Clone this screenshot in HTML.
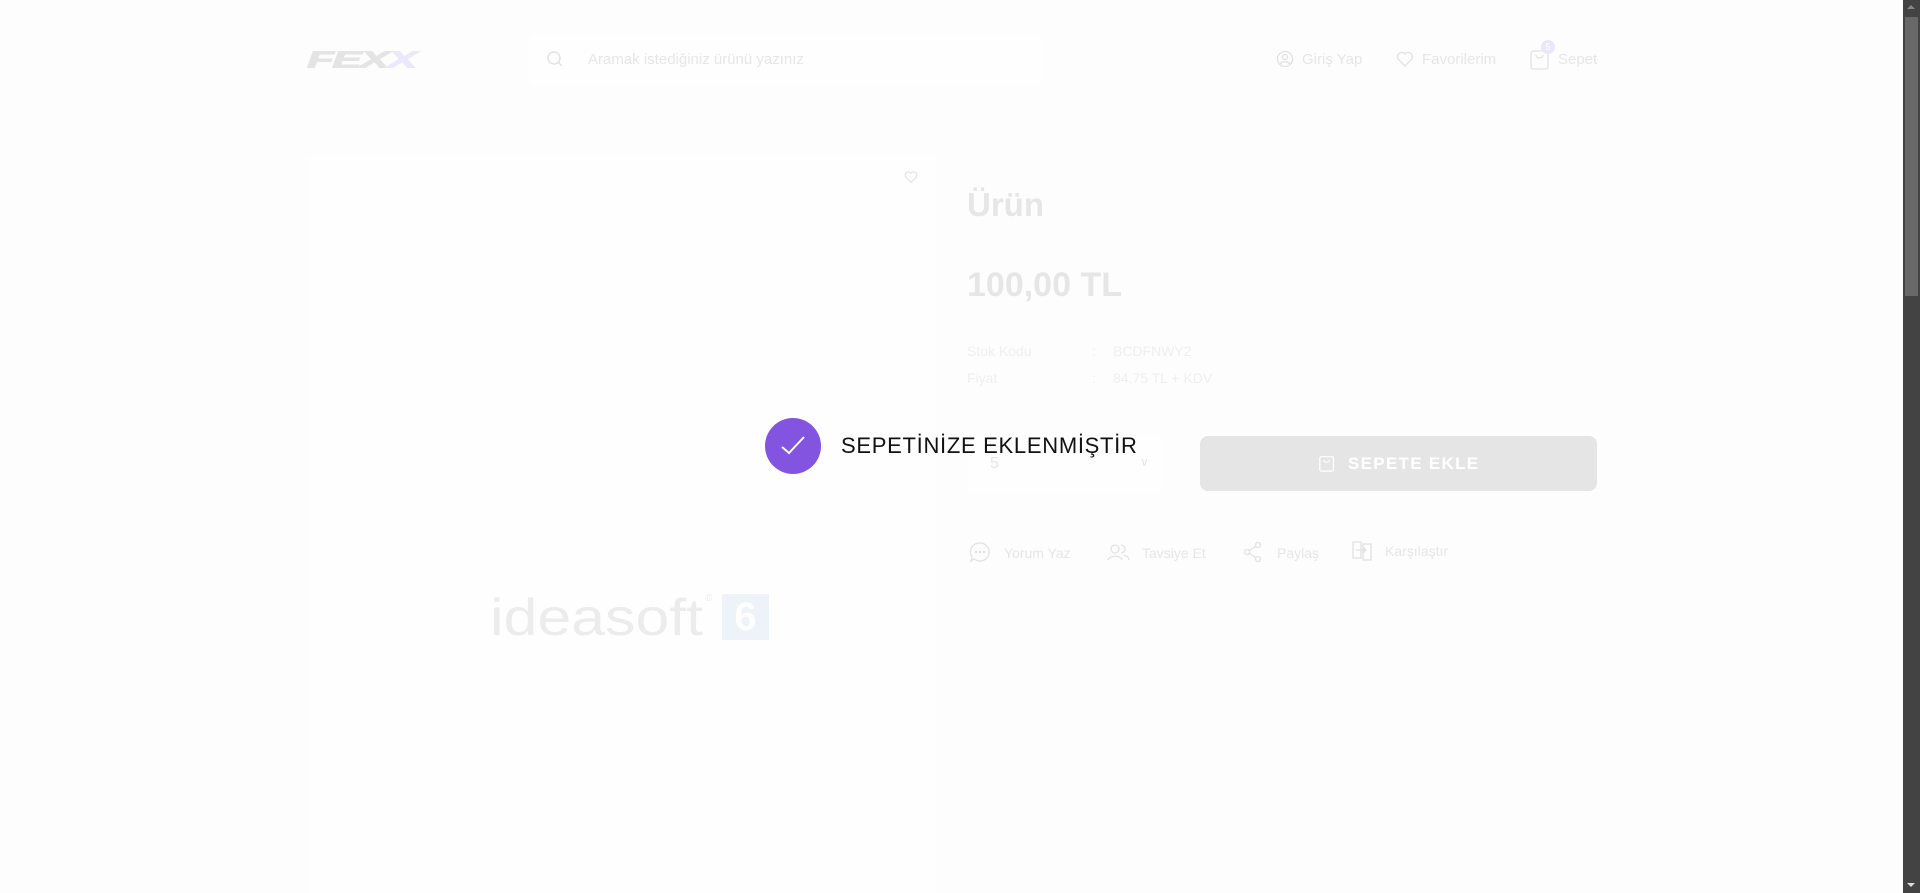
<!DOCTYPE html>
<html><head><meta charset="utf-8"><style>
*{margin:0;padding:0;box-sizing:border-box}
body{width:1920px;height:893px;overflow:hidden;background:#fdfdfd;font-family:"Liberation Sans",sans-serif;position:relative}
.a{position:absolute}
.t{color:#e6e6e6}
</style></head><body>
<div class="a" style="left:307px;top:46px;font:italic bold 26px 'Liberation Sans';color:#e4e4e4;letter-spacing:-1px;transform:scale(1.7,0.9);transform-origin:left top;-webkit-text-stroke:1px #e4e4e4">FEX<span style="color:#ece8fb;-webkit-text-stroke:1px #ece8fb">X</span></div>
<div class="a" style="left:529px;top:34px;width:514px;height:52px;background:#fefefe;border-radius:8px"></div>
<svg class="a" style="left:546px;top:50px" width="18" height="18" viewBox="0 0 18 18" fill="none" stroke="#e2e2e2" stroke-width="1.5"><circle cx="8" cy="8" r="6"/><path d="M12.5 12.5L16 16"/></svg>
<div class="a t" style="left:588px;top:51px;font-size:15px">Aramak istediğiniz ürünü yazınız</div>
<svg class="a" style="left:1276px;top:50px" width="18" height="18" viewBox="0 0 18 18" fill="none" stroke="#e2e2e2" stroke-width="1.3"><circle cx="9" cy="9" r="7.5"/><circle cx="9" cy="7" r="2.5"/><path d="M4 14c2-3 8-3 10 0"/></svg>
<div class="a t" style="left:1302px;top:51px;font-size:15px">Giriş Yap</div>
<svg class="a" style="left:1396px;top:50px" width="18" height="18" viewBox="0 0 18 18" fill="none" stroke="#e2e2e2" stroke-width="1.3"><path d="M9 16L2.5 9.5A3.8 3.8 0 019 4a3.8 3.8 0 016.5 5.5z"/></svg>
<div class="a t" style="left:1422px;top:51px;font-size:15px">Favorilerim</div>
<svg class="a" style="left:1530px;top:49px" width="20" height="21" viewBox="0 0 20 21" fill="none" stroke="#e2e2e2" stroke-width="1.3"><rect x="1" y="2" width="17" height="18" rx="2"/><path d="M6 6c0 4 7 4 7 0"/></svg>
<div class="a" style="left:1541px;top:40px;width:14px;height:14px;border-radius:50%;background:#ebe6fb;color:#fff;font-size:9px;text-align:center;line-height:14px">5</div>
<div class="a t" style="left:1558px;top:51px;font-size:15px">Sepet</div>

<div class="a" style="left:307px;top:157px;width:630px;height:736px;background:#fefefe"></div>
<svg class="a" style="left:904px;top:170px" width="14" height="14" viewBox="0 0 18 18" fill="none" stroke="#e2e2e2" stroke-width="1.5"><path d="M9 16L2.5 9.5A3.8 3.8 0 019 4a3.8 3.8 0 016.5 5.5z"/></svg>
<div class="a" style="left:490px;top:588px;font:300 52px 'Liberation Sans';color:#ececec;transform:scale(1.17,1);transform-origin:left top">ideasoft</div>
<div class="a" style="left:705px;top:593px;font-size:10px;color:#ececec">®</div>
<div class="a" style="left:722px;top:594px;width:47px;height:46px;background:#edf3f9;color:#fff;font:bold 40px 'Liberation Sans';text-align:center;line-height:46px">6</div>

<div class="a t" style="left:967px;top:186px;font-size:33px;font-weight:bold">Ürün</div>
<div class="a t" style="left:967px;top:266px;font-size:34px;font-weight:bold">100,00 TL</div>
<div class="a" style="left:967px;top:343px;font-size:14px;color:#efefef">Stok Kodu</div>
<div class="a" style="left:1092px;top:343px;font-size:14px;color:#efefef">:</div>
<div class="a" style="left:1113px;top:343px;font-size:14px;color:#efefef">BCDFNWY2</div>
<div class="a" style="left:967px;top:370px;font-size:14px;color:#efefef">Fiyat</div>
<div class="a" style="left:1092px;top:370px;font-size:14px;color:#efefef">:</div>
<div class="a" style="left:1113px;top:370px;font-size:14px;color:#efefef">84,75 TL + KDV</div>

<div class="a" style="left:967px;top:436px;width:196px;height:55px;background:#fefefe;border-radius:6px"></div>
<div class="a t" style="left:990px;top:455px;font-size:16px">5</div>
<div class="a t" style="left:1140px;top:455px;font-size:12px">∨</div>
<div class="a" style="left:1200px;top:436px;width:397px;height:55px;background:#e5e5e5;border-radius:8px"></div>
<svg class="a" style="left:1319px;top:455px" width="16" height="17" viewBox="0 0 20 21" fill="none" stroke="#fff" stroke-width="1.5"><rect x="1" y="2" width="17" height="18" rx="2"/><path d="M6 6c0 4 7 4 7 0"/></svg>
<div class="a" style="left:1348px;top:454px;font-size:17px;font-weight:bold;color:#fff;letter-spacing:1.3px">SEPETE EKLE</div>

<svg class="a" style="left:969px;top:541px" width="22" height="22" viewBox="0 0 22 22" fill="none" stroke="#e2e2e2" stroke-width="1.3"><path d="M11 2a9 9 0 11-6 15.7L2 20l1-4A9 9 0 0111 2z"/><circle cx="7" cy="11" r=".6"/><circle cx="11" cy="11" r=".6"/><circle cx="15" cy="11" r=".6"/></svg>
<div class="a t" style="left:1004px;top:545px;font-size:14px">Yorum Yaz</div>
<svg class="a" style="left:1107px;top:543px" width="24" height="18" viewBox="0 0 24 18" fill="none" stroke="#e2e2e2" stroke-width="1.3"><circle cx="8" cy="6" r="4"/><path d="M1 17c1-5 13-5 14 0"/><path d="M14 2a4 4 0 010 8M17 12c3 1 5 3 5 5"/></svg>
<div class="a t" style="left:1142px;top:545px;font-size:14px">Tavsiye Et</div>
<svg class="a" style="left:1243px;top:541px" width="20" height="22" viewBox="0 0 20 22" fill="none" stroke="#e2e2e2" stroke-width="1.3"><circle cx="15" cy="4" r="2.5"/><circle cx="4" cy="11" r="2.5"/><circle cx="15" cy="18" r="2.5"/><path d="M6 10l7-5M6 12l7 5"/></svg>
<div class="a t" style="left:1277px;top:545px;font-size:14px">Paylaş</div>
<svg class="a" style="left:1352px;top:541px" width="20" height="20" viewBox="0 0 20 20" fill="none" stroke="#e2e2e2" stroke-width="1.3"><rect x="1" y="1" width="8" height="16"/><rect x="11" y="3" width="8" height="16"/><path d="M4 9h10M11 6l3 3-3 3"/></svg>
<div class="a t" style="left:1385px;top:543px;font-size:14px">Karşılaştır</div>

<div class="a" style="left:765px;top:418px;width:56px;height:56px;border-radius:50%;background:#8254e0"></div>
<svg class="a" style="left:765px;top:418px" width="56" height="56" viewBox="0 0 56 56" fill="none" stroke="#fff" stroke-width="2"><path d="M17 29l7 6 15-16"/></svg>
<div class="a" style="left:841px;top:433px;font-size:22px;color:#111;letter-spacing:0.7px">SEPETİNİZE EKLENMİŞTİR</div>

<div class="a" style="left:1903px;top:0;width:17px;height:893px;background:#434343"></div>
<div class="a" style="left:1905px;top:17px;width:13px;height:279px;background:#686868"></div>
<div class="a" style="left:1907px;top:5px;width:0;height:0;border-left:4px solid transparent;border-right:4px solid transparent;border-bottom:4px solid #888"></div>
<div class="a" style="left:1907px;top:883px;width:0;height:0;border-left:4px solid transparent;border-right:4px solid transparent;border-top:4px solid #ddd"></div>
</body></html>
